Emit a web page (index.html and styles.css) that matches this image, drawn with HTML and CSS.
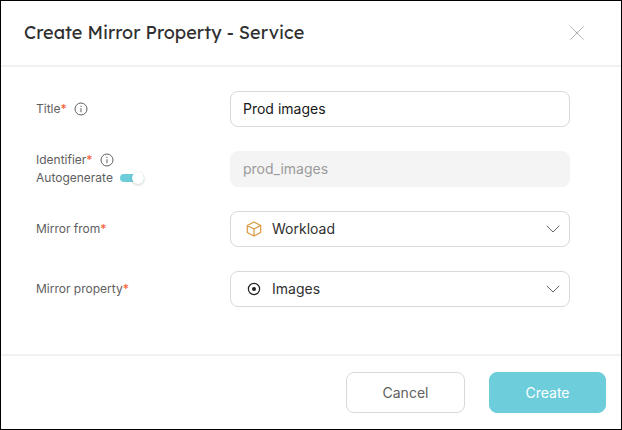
FILE: index.html
```html
<!DOCTYPE html>
<html lang="en">
<head>
<meta charset="utf-8">
<title>Create Mirror Property - Service</title>
<link rel="stylesheet" href="styles.css">
</head>
<body>
<main class="dialog">
  <header class="dialog-header">
    <h1>Create Mirror Property - Service</h1>
    <button class="close" type="button" aria-label="Close">
      <svg width="16" height="16" viewBox="0 0 16 16"><path d="M1.300 1.300l13.400 13.400M14.700 1.300l-13.400 13.400"/></svg>
    </button>
  </header>
  <form class="fields" id="mirror-form">
    <div class="row">
      <div class="label-line">
        <label for="title">Title<span class="required">*</span></label>
        <svg class="info" width="14" height="14" viewBox="0 0 14 14"><circle cx="7" cy="7" r="6"/><path d="M7 6.2v4M7 3.8v1.2"/></svg>
      </div>
      <input class="control" id="title" type="text" value="Prod images">
    </div>
    <div class="row">
      <div class="label-stack">
        <div class="label-line">
          <label for="identifier">Identifier<span class="required">*</span></label>
          <svg class="info" width="14" height="14" viewBox="0 0 14 14"><circle cx="7" cy="7" r="6"/><path d="M7 6.2v4M7 3.8v1.2"/></svg>
        </div>
        <div class="label-line">
          <label for="auto">Autogenerate</label>
          <input class="switch" id="auto" type="checkbox" role="switch" checked>
        </div>
      </div>
      <input class="control" id="identifier" type="text" value="prod_images" disabled>
    </div>
    <div class="row">
      <label for="from">Mirror from<span class="required">*</span></label>
      <div class="picker">
        <svg class="picker-icon cube" width="16" height="16" viewBox="0 0 16 16"><path d="M8 1l6.7 3.5v7L8 15l-6.7-3.500v-7zM1.3 4.5L8 8l6.7-3.5M8 8v7"/></svg>
        <select class="control" id="from"><option>Workload</option></select>
        <svg class="chevron" width="14" height="8" viewBox="0 0 14 8"><path d="M.7.8L7 7 13.3.8"/></svg>
      </div>
    </div>
    <div class="row">
      <label for="property">Mirror property<span class="required">*</span></label>
      <div class="picker">
        <svg class="picker-icon target" width="16" height="16" viewBox="0 0 16 16"><circle cx="8" cy="8" r="5.6"/><circle class="dot" cx="8" cy="8" r="2"/></svg>
        <select class="control" id="property"><option>Images</option></select>
        <svg class="chevron" width="14" height="8" viewBox="0 0 14 8"><path d="M.7.8L7 7 13.3.8"/></svg>
      </div>
    </div>
  </form>
  <footer class="dialog-footer">
    <button class="button" type="button">Cancel</button>
    <button class="button primary" type="submit" form="mirror-form">Create</button>
  </footer>
</main>
</body>
</html>
```

FILE: styles.css
```css
* {
  box-sizing: border-box;
}

body {
  margin: 0;
  background: #fff;
  color: #606060;
  font: 12px/18px Inter, "Liberation Sans", sans-serif;
}

button,
input,
select {
  margin: 0;
  font-family: inherit;
}

svg {
  display: block;
  fill: none;
  stroke: currentColor;
}

.dialog {
  display: flex;
  flex-direction: column;
  min-height: 100vh;
  border: 1px solid #000;
}

.dialog-header {
  display: flex;
  align-items: center;
  justify-content: space-between;
  padding: 20px 36px 20px 23px;
  border-bottom: 2px solid #f1f1f1;
}

h1 {
  margin: 0;
  color: #303030;
  font: 400 18px/24px Lexend, Inter, sans-serif;
}

.close {
  padding: 0;
  border: 0;
  background: none;
  color: #b4b4b4;
}

.fields {
  display: flex;
  flex: 1;
  flex-direction: column;
  gap: 24px;
  padding: 24px 51px 24px 35px;
}

.row {
  display: grid;
  grid-template-columns: 194px 1fr;
  align-items: center;
}

.label-line {
  display: flex;
  align-items: center;
  gap: 7px;
}

.required {
  color: #f9633d;
  font-weight: 500;
}

.info {
  color: #606060;
}

.control {
  width: 100%;
  height: 36px;
  padding: 0 12px 2px;
  border: 1px solid #d9d9d9;
  border-radius: 8px;
  background: #fff;
  color: #181818;
  font-size: 14px;
}

.control:disabled {
  border-color: #f4f4f4;
  background: #f4f4f4;
  color: #9b9b9b;
}

.switch {
  display: flex;
  align-items: center;
  justify-content: flex-end;
  width: 24px;
  height: 8px;
  border-radius: 4px;
  background: #6dcddb;
  appearance: none;
}

.switch::before {
  flex: none;
  width: 12px;
  height: 12px;
  border-radius: 50%;
  background: #fff;
  box-shadow: 0 1px 3px rgba(0, 0, 0, 0.2);
  content: "";
}

.picker {
  position: relative;
}

.picker .control {
  display: block;
  padding: 0 41px 2px;
  color: #303030;
  appearance: none;
}

.picker-icon,
.chevron {
  position: absolute;
  pointer-events: none;
}

.picker-icon {
  top: 10px;
  left: 16px;
}

.cube {
  color: #dd983f;
  stroke-width: 1.2;
  stroke-linejoin: round;
}

.target {
  color: #222;
  stroke-width: 1.2;
}

.dot {
  fill: currentColor;
  stroke: none;
}

.chevron {
  top: 14px;
  right: 10px;
  color: #666;
}

.dialog-footer {
  display: flex;
  justify-content: flex-end;
  gap: 24px;
  padding: 16px 15px;
  border-top: 2px solid #f1f1f1;
}

.button {
  width: 119px;
  height: 41px;
  border: 1px solid #d9d9d9;
  border-radius: 8px;
  background: #fff;
  color: #606060;
  font-size: 14px;
}

.primary {
  width: 117px;
  border-color: #6dcddb;
  background: #6dcddb;
  color: #fff;
}
```
